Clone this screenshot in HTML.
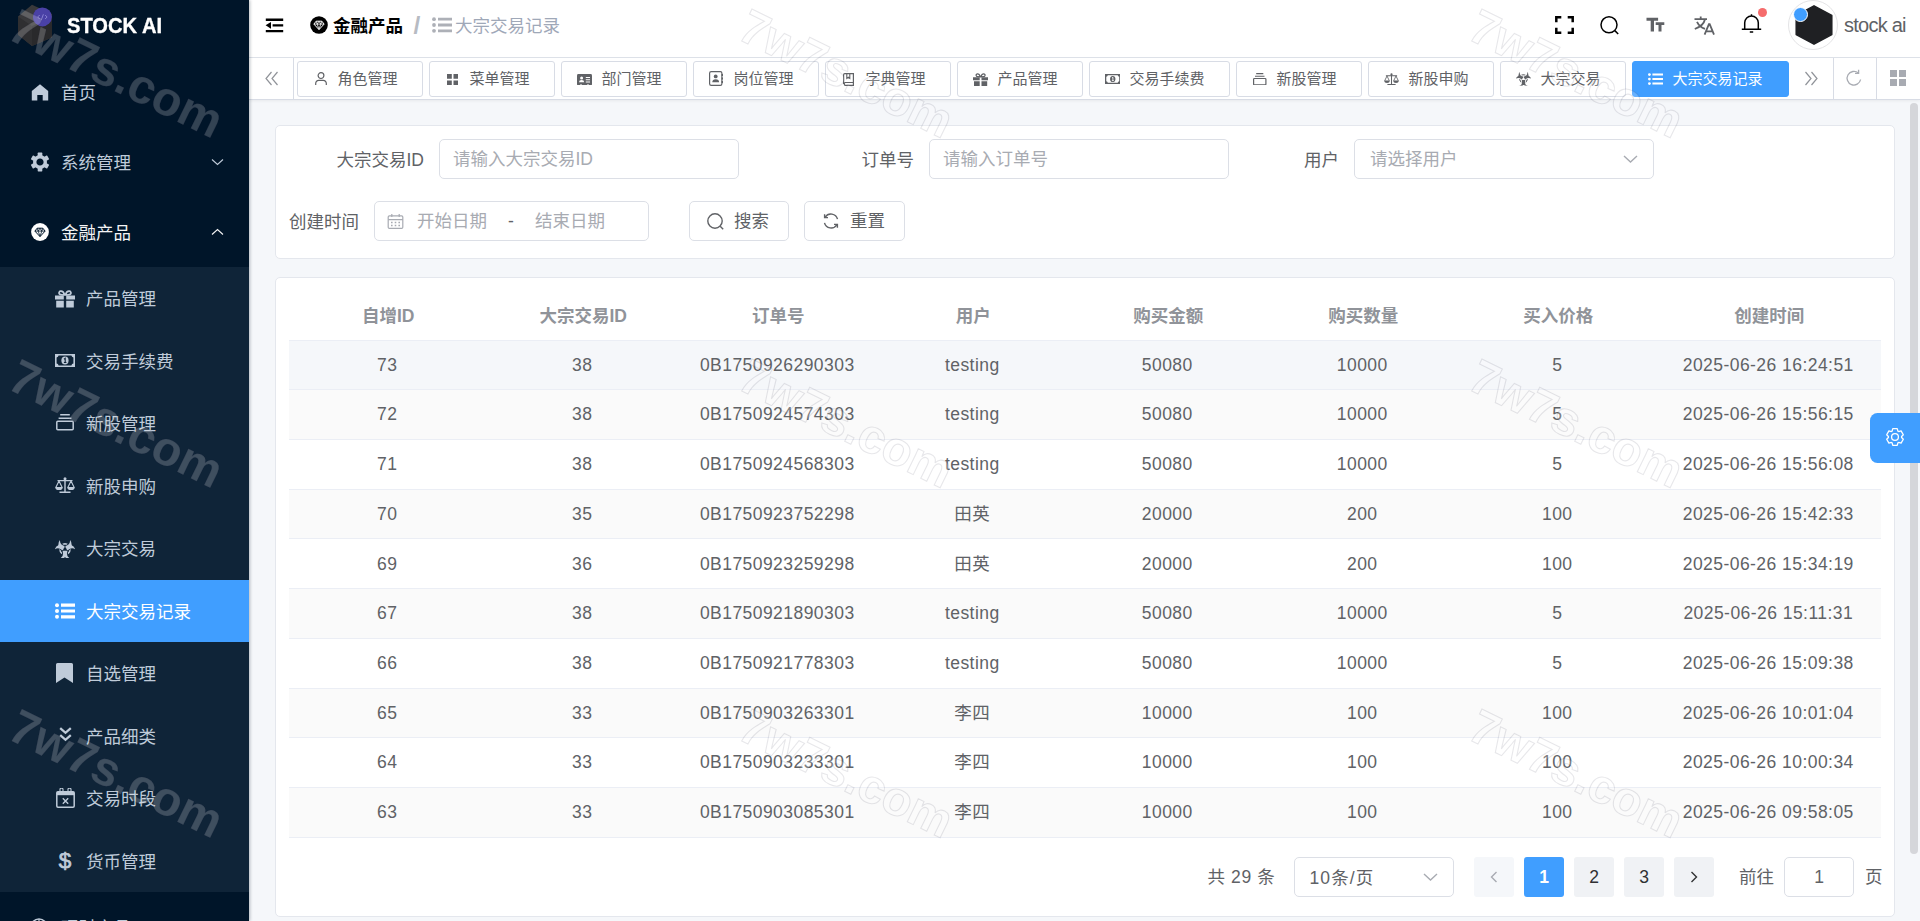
<!DOCTYPE html>
<html lang="zh-CN">
<head>
<meta charset="utf-8">
<title>STOCK AI - 大宗交易记录</title>
<style>
*{box-sizing:border-box;margin:0;padding:0}
html,body{width:1920px;height:921px;overflow:hidden}
body{position:relative;background:#f5f7fa;font-family:"Liberation Sans","Noto Sans CJK SC",sans-serif;font-size:17.5px;color:#606266;-webkit-font-smoothing:antialiased}
svg{display:block}
.abs{position:absolute}
/* ---------- sidebar ---------- */
#sidebar{position:absolute;left:0;top:0;width:249px;height:921px;background:#001529;overflow:hidden;box-shadow:1px 0 3px rgba(0,21,41,.28);z-index:5}
#logo{position:absolute;left:0;top:0;width:249px;height:57px}
#logo .t{position:absolute;left:67px;top:12.500px;font-size:22px;font-weight:bold;color:#fff;line-height:26px;white-space:nowrap;transform-origin:0 50%;transform:scaleX(.915);-webkit-text-stroke:.35px #fff}
.mi{position:absolute;left:0;width:249px;height:70px;color:#bfcbd9;line-height:72.500px;white-space:nowrap}
.mi .ic{position:absolute;left:30px;top:25px;width:20px;height:20px}
.mi .tx{position:absolute;left:61px;top:0}
.mi .ar{position:absolute;left:210px;top:29px;width:14px;height:12px}
#sub{position:absolute;left:0;top:267px;width:249px;height:625px;background:#0f2438}
.si{position:absolute;left:0;width:249px;height:62.5px;color:#bfcbd9;line-height:64px;white-space:nowrap}
.si .ic{position:absolute;left:54px;top:21px;width:21px;height:21px}
.si .tx{position:absolute;left:86px;top:0}
.si.on{background:#409eff;color:#fff}
.mi.act{color:#f4f4f5}
/* ---------- navbar ---------- */
#navbar{position:absolute;left:249px;top:0;width:1671px;height:58px;background:#fff;border-bottom:1px solid #dfe3ea}
#tags{position:absolute;left:249px;top:58px;width:1671px;height:42px;background:#fff;border-bottom:1px solid #d8dce5;box-shadow:0 1px 3px rgba(0,0,0,.06)}
.tag{position:absolute;top:2.500px;height:36px;border:1px solid #d8dce5;border-radius:3px;background:#fff;color:#606266;font-size:15px;line-height:34px;white-space:nowrap}
.tag .ic{position:absolute;left:16px;top:9px;width:15px;height:15px}
.tag .tx{position:absolute;left:39.500px;top:0}
.tag.on{background:#409eff;border-color:#409eff;color:#fff}
/* ---------- cards ---------- */
.card{position:absolute;background:#fff;border:1px solid #e4e7ed;border-radius:5px}
.lbl{position:absolute;color:#606266;line-height:42px;white-space:nowrap;text-align:right}
.inp{position:absolute;height:40px;border:1px solid #dcdfe6;border-radius:5px;background:#fff;color:#a8abb2;line-height:38px;white-space:nowrap}
.btn{position:absolute;height:40px;border:1px solid #dcdfe6;border-radius:5px;background:#fff;color:#606266;line-height:38px;white-space:nowrap}
/* ---------- table ---------- */
#tbl{position:absolute;left:289px;top:291px;width:1592px}
.tr{position:absolute;left:0;width:1592px;height:49.700px;border-bottom:1px solid #ebeef5;color:#606266}
.tr.s{background:#fafafa}
.tr.h{background:#f5f7fa}
.tr.th{color:#909399;font-weight:bold}
.tr span{position:absolute;top:0;height:48.700px;line-height:49.200px;padding-left:1.500px;text-align:center;white-space:nowrap;letter-spacing:.45px}
.tr.th span{letter-spacing:0;line-height:50.500px;padding-left:3.500px}
.c1{left:0;width:195px}.c2{left:195px;width:195px}.c3{left:390px;width:195px}.c4{left:585px;width:195px}
.c5{left:780px;width:195px}.c6{left:975px;width:195px}.c7{left:1170px;width:195px}.c8{left:1365px;width:227px}
/* ---------- pagination ---------- */
.pg{position:absolute;top:857px;height:40px;width:40px;border-radius:3px;background:#f0f2f5;color:#303133;line-height:41.500px;text-align:center;font-size:17.5px}
.pg.on{background:#409eff;color:#fff;font-weight:bold}
/* ---------- watermark ---------- */
.wm{position:absolute;font-size:48.300px;font-weight:bold;white-space:nowrap;transform-origin:0 0;transform:rotate(26deg);pointer-events:none;line-height:47px;color:rgba(255,255,255,.2);-webkit-text-stroke:1.100px rgba(40,40,60,.11);z-index:9}
</style>
</head>
<body>

<!-- ================= SIDEBAR ================= -->
<div id="sidebar">
  <div id="logo">
    <svg class="abs" style="left:16px;top:4px" width="40" height="46" viewBox="0 0 40 46">
      <polygon points="2,12.500 16,.7 36,10 36,33.500 16,42 2,30.700" fill="#39393b"/>
      <polygon points="2,12.500 16,22 16,42 2,30.700" fill="#2f2f31"/>
      <polygon points="16,22 36,13 36,33.500 16,42" fill="#29292b"/>
      <circle cx="26.400" cy="12.900" r="9.500" fill="#4a41a6"/>
      <path d="M23.700 11l-2 2 2 2M29.100 11l2 2-2 2M27.400 10.300l-2 5.400" stroke="#8f88d8" stroke-width=".9" fill="none"/>
    </svg>
    <div class="t">STOCK AI</div>
  </div>

  <div class="mi" style="top:57px"><svg class="abs" style="left:30px;top:26px" width="20" height="19" viewBox="0 0 20 19"><path d="M10 1.200L1.800 8v9.500h5.500v-5.500h5.400v5.500h5.500V8z" fill="currentColor"/></svg><span class="tx">首页</span></div>
  <div class="mi" style="top:127px"><svg class="abs" style="left:30px;top:25px" width="20" height="20" viewBox="0 0 20 20"><g transform="translate(10 10)"><circle r="5.300" fill="none" stroke="currentColor" stroke-width="3.400"/><rect x="-2.300" y="-9.400" width="4.600" height="3.600" rx=".6" fill="currentColor" transform="rotate(0)"/><rect x="-2.300" y="-9.400" width="4.600" height="3.600" rx=".6" fill="currentColor" transform="rotate(60)"/><rect x="-2.300" y="-9.400" width="4.600" height="3.600" rx=".6" fill="currentColor" transform="rotate(120)"/><rect x="-2.300" y="-9.400" width="4.600" height="3.600" rx=".6" fill="currentColor" transform="rotate(180)"/><rect x="-2.300" y="-9.400" width="4.600" height="3.600" rx=".6" fill="currentColor" transform="rotate(240)"/><rect x="-2.300" y="-9.400" width="4.600" height="3.600" rx=".6" fill="currentColor" transform="rotate(300)"/></g></svg><span class="tx">系统管理</span><svg class="abs" style="left:211px;top:31px" width="13" height="8" viewBox="0 0 13 8"><path d="M1 1.500l5.500 5 5.500-5" fill="none" stroke="currentColor" stroke-width="1.100"/></svg></div>
  <div class="mi act" style="top:197px"><svg class="abs" style="left:31px;top:26px" width="18" height="18" viewBox="0 0 18 18"><circle cx="9" cy="9" r="8.900" fill="#fff"/><path d="M6.200 5.200h5.600l2.300 2.900L9 13.600 3.900 8.100z" fill="none" stroke="#001529" stroke-width="1"/><path d="M3.900 8.100h10.200M7.200 8.100L9 13.400l1.800-5.300M6.200 5.200l1 2.900L9 5.200l1.800 2.900 1-2.900" fill="none" stroke="#001529" stroke-width=".8"/></svg><span class="tx">金融产品</span><svg class="abs" style="left:211px;top:30.500px" width="13" height="8" viewBox="0 0 13 8"><path d="M1 6.500l5.500-5 5.500 5" fill="none" stroke="currentColor" stroke-width="1.100"/></svg></div>

  <div id="sub">
    <div class="si" style="top:0"><svg class="abs" style="left:55px;top:22.500px" width="20" height="18" viewBox="0 0 20 18"><path d="M0 5.500h8.800v4H0zM11.200 5.500H20v4h-8.800zM1.200 10.800h7.600v6.700H1.200zM11.200 10.800h7.600v6.700h-7.600z" fill="currentColor"/><path d="M9.600 5C8.800 2.300 7.200 1 5.600 1.200 4 1.400 3.600 3.200 4.600 4.200 5.300 4.900 7 5 9.600 5zM10.400 5c.8-2.700 2.400-4 4-3.800 1.600.2 2 2 1 3-.7.700-2.400.800-5 .800z" fill="none" stroke="currentColor" stroke-width="1.700"/></svg><span class="tx">产品管理</span></div>
    <div class="si" style="top:62.5px"><svg class="abs" style="left:55px;top:24px" width="20" height="13" viewBox="0 0 20 13"><path d="M0 0h20v13H0z" fill="currentColor"/><path d="M1.600 3.400A2.300 2.300 0 0 0 3.600 1.600h12.800a2.300 2.300 0 0 0 2 1.800v6.200a2.300 2.300 0 0 0-2 1.800H3.600a2.300 2.300 0 0 0-2-1.800z" fill="#0f2438"/><ellipse cx="10" cy="6.500" rx="3.600" ry="4.100" fill="currentColor"/><path d="M9 5.200l1.200-.9v4M8.900 8.500h2.500" fill="none" stroke="#0f2438" stroke-width="1.100"/></svg><span class="tx">交易手续费</span></div>
    <div class="si" style="top:125px"><svg class="abs" style="left:56px;top:22px" width="18" height="17" viewBox="0 0 18 17"><path d="M4.200.800h9.600M2.600 4.200h12.800" fill="none" stroke="currentColor" stroke-width="1.500"/><rect x=".8" y="7.300" width="16.400" height="8.400" rx="1" fill="none" stroke="currentColor" stroke-width="1.500"/></svg><span class="tx">新股管理</span></div>
    <div class="si" style="top:187.5px"><svg class="abs" style="left:55px;top:22px" width="20" height="17" viewBox="0 0 20 17"><path d="M10 1.500v13M4.500 15.200h11M2.500 3.600h15" fill="none" stroke="currentColor" stroke-width="1.400"/><circle cx="10" cy="1.800" r="1.500" fill="currentColor"/><path d="M4 4L.8 10.500h6.400zM16 4l-3.200 6.500h6.400z" fill="none" stroke="currentColor" stroke-width="1.100" stroke-linejoin="round"/><path d="M.4 10.500h7.200a3.600 2.600 0 0 1-7.200 0zM12.400 10.500h7.200a3.600 2.600 0 0 1-7.200 0z" fill="currentColor"/></svg><span class="tx">新股申购</span></div>
    <div class="si" style="top:250px"><svg class="abs" style="left:55px;top:22.500px" width="20" height="18.5" viewBox="-22.700 -19.700 45.400 39.600" preserveAspectRatio="none"><defs><clipPath id="bzsc"><circle cx="0.00" cy="-18.50" r="9.500"/><circle cx="16.02" cy="9.25" r="9.500"/><circle cx="-16.02" cy="9.25" r="9.500"/></clipPath><mask id="bzsm" maskUnits="userSpaceOnUse" x="-30" y="-30" width="60" height="60"><g fill="#fff"><circle cx="0.00" cy="-10.00" r="15"/><circle cx="8.66" cy="5.00" r="15"/><circle cx="-8.66" cy="5.00" r="15"/></g><g fill="#000"><circle cx="0.00" cy="-18.50" r="11.500"/><circle cx="16.02" cy="9.25" r="11.500"/><circle cx="-16.02" cy="9.25" r="11.500"/><circle r="3.400"/><rect x="-1.100" y="-8" width="2.200" height="8" transform="rotate(0)"/><rect x="-1.100" y="-8" width="2.200" height="8" transform="rotate(120)"/><rect x="-1.100" y="-8" width="2.200" height="8" transform="rotate(240)"/></g><circle r="11.300" fill="none" stroke="#fff" stroke-width="3.600" clip-path="url(#bzsc)"/></mask></defs><rect x="-30" y="-30" width="60" height="60" fill="currentColor" mask="url(#bzsm)"/></svg><span class="tx">大宗交易</span></div>
    <div class="si on" style="top:312.5px"><svg class="abs" style="left:55px;top:23px" width="20" height="16" viewBox="0 0 20 16"><circle cx="2" cy="2.200" r="2" fill="currentColor"/><circle cx="2" cy="8" r="2" fill="currentColor"/><circle cx="2" cy="13.800" r="2" fill="currentColor"/><path d="M6 .6H20v3.200H6zM6 6.400H20v3.200H6zM6 12.200H20v3.200H6z" fill="currentColor"/></svg><span class="tx">大宗交易记录</span></div>
    <div class="si" style="top:375px"><svg class="abs" style="left:56px;top:20.500px" width="17" height="20" viewBox="0 0 17 20"><path d="M1.500 0h14a1.500 1.500 0 0 1 1.500 1.500V20l-8.500-5.400L0 20V1.500A1.500 1.500 0 0 1 1.500 0z" fill="currentColor"/></svg><span class="tx">自选管理</span></div>
    <div class="si" style="top:437.5px"><svg class="abs" style="left:58.500px;top:22.500px" width="13" height="15" viewBox="0 0 13 15"><path d="M1.200 1.200l5.300 4.600 5.300-4.600M1.200 8.200l5.300 4.600 5.300-4.600" fill="none" stroke="currentColor" stroke-width="2.300"/></svg><span class="tx">产品细类</span></div>
    <div class="si" style="top:500px"><svg class="abs" style="left:55.500px;top:21px" width="19" height="20" viewBox="0 0 19 20"><rect x=".8" y="3.800" width="17.400" height="15.400" rx="1.200" fill="none" stroke="currentColor" stroke-width="1.500"/><path d="M.8 3.800h17.400v3.400H.8z" fill="currentColor"/><rect x="4" y=".3" width="3" height="5" rx="1" fill="none" stroke="currentColor" stroke-width="1.100"/><rect x="12" y=".3" width="3" height="5" rx="1" fill="none" stroke="currentColor" stroke-width="1.100"/><path d="M6.800 10.300l5.400 5.400M12.200 10.300l-5.400 5.400" stroke="currentColor" stroke-width="1.400"/></svg><span class="tx">交易时段</span></div>
    <div class="si" style="top:562.5px"><span class="abs" style="left:58.500px;top:-1px;font-size:22.500px;font-weight:normal;-webkit-text-stroke:.7px currentColor;width:13px;text-align:center">$</span><span class="tx">货币管理</span></div>
  </div>
  <div class="mi" style="top:892px"><svg class="abs" style="left:30px;top:26px" width="18" height="18" viewBox="0 0 18 18"><circle cx="9" cy="9" r="8" fill="none" stroke="currentColor" stroke-width="1.600"/><path d="M9 1v16M1 9h16" stroke="currentColor" stroke-width="1.200"/></svg><span class="tx">理财产品</span></div>
</div>

<!-- ================= NAVBAR ================= -->
<div id="navbar">
  <!-- hamburger (coords relative to navbar: x-249) -->
  <svg class="abs" style="left:16px;top:17px" width="19" height="17" viewBox="0 0 19 17"><path d="M.8 1.6h17.4v2.3H.8zM7.6 7.2h10.6v2.3H7.6zM.8 12.9h17.4v2.3H.8z" fill="#000"/><path d="M.6 8.35L6 5v6.7z" fill="#000"/></svg>
  <!-- breadcrumb -->
  <svg class="abs" style="left:61px;top:16px" width="18" height="18" viewBox="0 0 18 18"><circle cx="9" cy="9" r="8.8" fill="#000"/><path d="M6.2 5.2h5.6l2.3 2.9L9 13.6 3.9 8.1z" fill="none" stroke="#fff" stroke-width="1"/><path d="M3.9 8.1h10.2M7.2 8.1L9 13.4l1.8-5.3M6.2 5.2l1 2.9L9 5.2l1.8 2.9 1-2.9" fill="none" stroke="#fff" stroke-width=".8"/></svg>
  <div class="abs" style="left:84px;top:0;line-height:52px;font-weight:bold;color:#000;white-space:nowrap">金融产品</div>
  <div class="abs" style="left:164.500px;top:0;line-height:51px;font-weight:bold;color:#b7bbc3;font-size:24.500px;white-space:nowrap">/</div>
  <svg class="abs" style="left:183px;top:17px" width="20" height="16" viewBox="0 0 20 16"><circle cx="2" cy="2.200" r="1.900" fill="#adb0b7"/><circle cx="2" cy="8" r="1.900" fill="#adb0b7"/><circle cx="2" cy="13.800" r="1.900" fill="#adb0b7"/><path d="M6 .8H20v2.800H6zM6 6.600H20v2.800H6zM6 12.400H20v2.800H6z" fill="#adb0b7"/></svg>
  <div class="abs" style="left:206px;top:0;line-height:52px;color:#9fa8b8;white-space:nowrap">大宗交易记录</div>

  <!-- right tools -->
  <svg class="abs" style="left:1306px;top:16px" width="19" height="18" viewBox="0 0 19 18"><path d="M1.3 6.2V1.3h5M12.7 1.3h5v4.9M17.7 11.8v4.9h-5M6.3 16.7h-5v-4.9" fill="none" stroke="#000" stroke-width="2.5"/></svg>
  <svg class="abs" style="left:1350px;top:15px" width="22" height="21" viewBox="0 0 22 21"><circle cx="10" cy="9.8" r="8" fill="none" stroke="#000" stroke-width="1.5"/><path d="M15.8 15.6l3.4 3.4" stroke="#000" stroke-width="1.5"/></svg>
  <svg class="abs" style="left:1397px;top:17px" width="19" height="15" viewBox="0 0 19 15"><path d="M.5.8h11.6v3H8v10.6H4.7V3.800H.5zM9.700 5.200h8.600v2.700h-2.800v6.500h-3V7.900H9.700z" fill="#606266"/></svg>
  <svg class="abs" style="left:1445px;top:16px" width="21" height="19" viewBox="0 0 21 19"><path d="M.5 3.200h12.500M6.700.400v2.800M11 3.200C10.200 7 6.500 10.800.8 13M3 5.800c1.500 3.200 4.500 5.800 8 7" fill="none" stroke="#606266" stroke-width="1.800"/><path d="M10.600 18.600l4.300-10.400h.8l4.300 10.400M12.200 15.300h6.200" fill="none" stroke="#606266" stroke-width="1.800"/></svg>
  <svg class="abs" style="left:1492px;top:13px" width="21" height="21" viewBox="0 0 21 21"><path d="M10.500 1.200v1.500M3.700 16V9.800a6.800 6.800 0 0 1 13.600 0V16M.800 16.200h19.400M8.800 19h3.400" fill="none" stroke="#000" stroke-width="1.5"/></svg>
  <div class="abs" style="left:1508.500px;top:7.500px;width:9px;height:9px;border-radius:50%;background:#f56c6c"></div>
  <!-- avatar -->
  <div class="abs" style="left:1539px;top:0;width:50px;height:50px;border-radius:50%;background:#fff;border:1px solid #e4e4e6"></div>
  <svg class="abs" style="left:1546px;top:5px" width="38" height="40" viewBox="0 0 38 40"><polygon points="19,.8 36.800,10.400 36.800,29.600 19,39.200 1.200,29.600 1.200,10.400" fill="#1f2023" stroke="#1f2023" stroke-width="1.500" stroke-linejoin="round"/></svg>
  <div class="abs" style="left:1544px;top:7px;width:15px;height:15px;border-radius:50%;background:#409eff;border:1.500px solid #fff"></div>
  <div class="abs" style="left:1595px;top:0;line-height:50px;font-size:20px;color:#606266;white-space:nowrap;letter-spacing:-.75px">stock ai</div>
</div>

<!-- ================= TAGS ================= -->
<div id="tags">
  <svg class="abs" style="left:16px;top:13px" width="14" height="15" viewBox="0 0 14 15"><path d="M6.500 1L1 7.500 6.500 14M12.500 1L7 7.500 12.500 14" fill="none" stroke="#909399" stroke-width="1.200"/></svg>
  <div class="abs" style="left:44px;top:0;width:1px;height:42px;background:#d8dce5"></div>
  <div class="tag" style="left:48px;width:126px"><svg class="abs" style="left:16.500px;top:10.500px" width="12" height="13.5" viewBox="0 0 12 13.5"><circle cx="6" cy="3.600" r="2.900" fill="none" stroke="currentColor" stroke-width="1.200"/><path d="M.7 13v-1.600a3 3 0 0 1 3-3h4.600a3 3 0 0 1 3 3V13" fill="none" stroke="currentColor" stroke-width="1.200"/></svg><span class="tx">角色管理</span></div>
  <div class="tag" style="left:180px;width:126px"><svg class="abs" style="left:16.500px;top:12px" width="11.3" height="11.3" viewBox="0 0 11.3 11.3"><path d="M0 0h4.800v4.800H0zM6.500 0h4.800v4.800H6.500zM0 6.500h4.800v4.800H0zM6.500 6.500h4.800v4.800H6.500z" fill="currentColor"/></svg><span class="tx">菜单管理</span></div>
  <div class="tag" style="left:312px;width:126px"><svg class="abs" style="left:14.800px;top:12px" width="15" height="11.5" viewBox="0 0 15 11.5"><rect x="0" y="0" width="15" height="11.500" rx="1.400" fill="currentColor"/><circle cx="4.600" cy="4" r="1.500" fill="#fff"/><path d="M2 8.300a2.600 2.200 0 0 1 5.200 0zM8.800 3h4.200v1H8.800zM8.800 5.200h4.200v1H8.800zM8.800 7.400h4.200v1H8.800z" fill="#fff"/><path d="M3 10.600h2v.9H3zM10 10.600h2v.9h-2z" fill="#fff"/></svg><span class="tx">部门管理</span></div>
  <div class="tag" style="left:444px;width:126px"><svg class="abs" style="left:14.500px;top:9.800px" width="14.5" height="15" viewBox="0 0 14.5 15"><rect x=".6" y=".6" width="12.300" height="13.800" rx="1.600" fill="none" stroke="currentColor" stroke-width="1.200"/><circle cx="6.700" cy="5.400" r="1.900" fill="currentColor"/><path d="M3.300 11.200a3.400 2.900 0 0 1 6.800 0z" fill="currentColor"/><path d="M13.300 3v2M13.300 6.500v2M13.300 10v2" stroke="currentColor" stroke-width="1.500"/></svg><span class="tx">岗位管理</span></div>
  <div class="tag" style="left:576px;width:126px"><svg class="abs" style="left:16.800px;top:11px" width="11" height="13" viewBox="0 0 11 13"><path d="M.6 11V1.800A1.200 1.200 0 0 1 1.800.6h8.600V9.500H2.200A1.600 1.600 0 0 0 2.200 12.400h8.200V9.500" fill="none" stroke="currentColor" stroke-width="1.200"/><path d="M3.800.6v4.800l1.500-1.200 1.500 1.200V.6" fill="none" stroke="currentColor" stroke-width="1.100"/></svg><span class="tx">字典管理</span></div>
  <div class="tag" style="left:708px;width:126px"><svg class="abs" style="left:14.500px;top:11px" width="15.2" height="13.2" viewBox="0 0 15.2 13.2"><path d="M0 4.200h6.700v3H0zM8.500 4.200h6.700v3H8.500zM1 8.200h5.700v5H1zM8.500 8.200h5.700v5H8.500z" fill="currentColor"/><path d="M7.300 3.800C6.700 1.800 5.500.8 4.300.9 3.100 1 2.800 2.400 3.500 3.200 4 3.700 5.300 3.800 7.300 3.800zM7.900 3.800c.6-2 1.800-3 3-2.900 1.200.100 1.500 1.500.800 2.300-.5.500-1.800.6-3.800.6z" fill="none" stroke="currentColor" stroke-width="1.300"/></svg><span class="tx">产品管理</span></div>
  <div class="tag" style="left:840px;width:141px"><svg class="abs" style="left:14.500px;top:12.500px" width="15.5" height="10" viewBox="0 0 15.5 10"><path d="M0 0h15.500v10H0z" fill="currentColor"/><path d="M1.300 2.700A1.800 1.800 0 0 0 2.800 1.300h9.900a1.800 1.800 0 0 0 1.500 1.400v4.600a1.800 1.800 0 0 0-1.500 1.400H2.800a1.800 1.800 0 0 0-1.500-1.400z" fill="#fff"/><ellipse cx="7.750" cy="5" rx="2.700" ry="3.100" fill="currentColor"/><path d="M7 4l.9-.7v3.200M6.900 6.600h1.900" fill="none" stroke="#fff" stroke-width=".85"/></svg><span class="tx">交易手续费</span></div>
  <div class="tag" style="left:987px;width:126px"><svg class="abs" style="left:16px;top:11px" width="13.5" height="12.5" viewBox="0 0 13.5 12.5"><path d="M3.200.6h7.100M2 3.200h9.500" fill="none" stroke="currentColor" stroke-width="1.100"/><rect x=".6" y="5.500" width="12.300" height="6.400" rx=".8" fill="none" stroke="currentColor" stroke-width="1.200"/></svg><span class="tx">新股管理</span></div>
  <div class="tag" style="left:1119px;width:126px"><svg class="abs" style="left:14.500px;top:11.500px" width="15" height="12.5" viewBox="0 0 15 12.5"><path d="M7.500 1.200v9.800M3.400 11.500h8.200M1.900 2.700h11.200" fill="none" stroke="currentColor" stroke-width="1.050"/><circle cx="7.500" cy="1.400" r="1.100" fill="currentColor"/><path d="M3 3L.6 7.900h4.800zM12 3L9.600 7.900h4.800z" fill="none" stroke="currentColor" stroke-width=".85" stroke-linejoin="round"/><path d="M.3 7.900h5.400a2.700 2 0 0 1-5.400 0zM9.300 7.900h5.400a2.700 2 0 0 1-5.400 0z" fill="currentColor"/></svg><span class="tx">新股申购</span></div>
  <div class="tag" style="left:1251px;width:126px"><svg class="abs" style="left:14.700px;top:10.800px" width="15" height="13.7" viewBox="-22.700 -19.700 45.400 39.600" preserveAspectRatio="none"><defs><clipPath id="bztc"><circle cx="0.00" cy="-18.50" r="9.500"/><circle cx="16.02" cy="9.25" r="9.500"/><circle cx="-16.02" cy="9.25" r="9.500"/></clipPath><mask id="bztm" maskUnits="userSpaceOnUse" x="-30" y="-30" width="60" height="60"><g fill="#fff"><circle cx="0.00" cy="-10.00" r="15"/><circle cx="8.66" cy="5.00" r="15"/><circle cx="-8.66" cy="5.00" r="15"/></g><g fill="#000"><circle cx="0.00" cy="-18.50" r="11.500"/><circle cx="16.02" cy="9.25" r="11.500"/><circle cx="-16.02" cy="9.25" r="11.500"/><circle r="3.400"/><rect x="-1.100" y="-8" width="2.200" height="8" transform="rotate(0)"/><rect x="-1.100" y="-8" width="2.200" height="8" transform="rotate(120)"/><rect x="-1.100" y="-8" width="2.200" height="8" transform="rotate(240)"/></g><circle r="11.300" fill="none" stroke="#fff" stroke-width="3.600" clip-path="url(#bztc)"/></mask></defs><rect x="-30" y="-30" width="60" height="60" fill="currentColor" mask="url(#bztm)"/></svg><span class="tx">大宗交易</span></div>
  <div class="tag on" style="left:1383px;width:157px"><svg class="abs" style="left:15px;top:11.500px" width="15" height="12.2" viewBox="0 0 15 12.2"><circle cx="1.400" cy="1.600" r="1.400" fill="currentColor"/><circle cx="1.400" cy="6.100" r="1.400" fill="currentColor"/><circle cx="1.400" cy="10.600" r="1.400" fill="currentColor"/><path d="M4.400.6H15v2H4.400zM4.400 5.100H15v2H4.400zM4.400 9.600H15v2H4.400z" fill="currentColor"/></svg><span class="tx">大宗交易记录</span></div>
  <svg class="abs" style="left:1555px;top:13px" width="14" height="15" viewBox="0 0 14 15"><path d="M1.500 1L7 7.500 1.500 14M7.500 1L13 7.500 7.500 14" fill="none" stroke="#909399" stroke-width="1.200"/></svg>
  <div class="abs" style="left:1584px;top:0;width:1px;height:42px;background:#d8dce5"></div>
  <svg class="abs" style="left:1596px;top:11px" width="18" height="18" viewBox="0 0 18 18"><path d="M15.600 10.500A6.800 6.800 0 1 1 13.300 4" fill="none" stroke="#a8abb2" stroke-width="1.300"/><path d="M13.600.800v3.600H10" fill="none" stroke="#a8abb2" stroke-width="1.300"/></svg>
  <div class="abs" style="left:1627px;top:0;width:1px;height:42px;background:#d8dce5"></div>
  <svg class="abs" style="left:1641px;top:12px" width="16" height="16" viewBox="0 0 16 16"><path d="M0 0h7v7H0zM9 0h7v7H9zM0 9h7v7H0zM9 9h7v7H9z" fill="#a8abb2"/></svg>
</div>

<!-- ================= SEARCH CARD ================= -->
<div class="card" id="card1" style="left:275px;top:125px;width:1620px;height:134px"></div>

<!-- ================= TABLE CARD ================= -->
<div class="card" id="card2" style="left:275px;top:277px;width:1620px;height:640px"></div>

<!-- ================= TABLE ================= -->
<div id="tbl">
  <div class="tr th" style="top:0"><span class="c1">自增ID</span><span class="c2">大宗交易ID</span><span class="c3">订单号</span><span class="c4">用户</span><span class="c5">购买金额</span><span class="c6">购买数量</span><span class="c7">买入价格</span><span class="c8">创建时间</span></div>
  <div class="tr h" style="top:49.7px"><span class="c1">73</span><span class="c2">38</span><span class="c3">0B1750926290303</span><span class="c4">testing</span><span class="c5">50080</span><span class="c6">10000</span><span class="c7">5</span><span class="c8">2025-06-26 16:24:51</span></div>
  <div class="tr s" style="top:99.4px"><span class="c1">72</span><span class="c2">38</span><span class="c3">0B1750924574303</span><span class="c4">testing</span><span class="c5">50080</span><span class="c6">10000</span><span class="c7">5</span><span class="c8">2025-06-26 15:56:15</span></div>
  <div class="tr" style="top:149.1px"><span class="c1">71</span><span class="c2">38</span><span class="c3">0B1750924568303</span><span class="c4">testing</span><span class="c5">50080</span><span class="c6">10000</span><span class="c7">5</span><span class="c8">2025-06-26 15:56:08</span></div>
  <div class="tr s" style="top:198.8px"><span class="c1">70</span><span class="c2">35</span><span class="c3">0B1750923752298</span><span class="c4">田英</span><span class="c5">20000</span><span class="c6">200</span><span class="c7">100</span><span class="c8">2025-06-26 15:42:33</span></div>
  <div class="tr" style="top:248.5px"><span class="c1">69</span><span class="c2">36</span><span class="c3">0B1750923259298</span><span class="c4">田英</span><span class="c5">20000</span><span class="c6">200</span><span class="c7">100</span><span class="c8">2025-06-26 15:34:19</span></div>
  <div class="tr s" style="top:298.2px"><span class="c1">67</span><span class="c2">38</span><span class="c3">0B1750921890303</span><span class="c4">testing</span><span class="c5">50080</span><span class="c6">10000</span><span class="c7">5</span><span class="c8">2025-06-26 15:11:31</span></div>
  <div class="tr" style="top:347.9px"><span class="c1">66</span><span class="c2">38</span><span class="c3">0B1750921778303</span><span class="c4">testing</span><span class="c5">50080</span><span class="c6">10000</span><span class="c7">5</span><span class="c8">2025-06-26 15:09:38</span></div>
  <div class="tr s" style="top:397.6px"><span class="c1">65</span><span class="c2">33</span><span class="c3">0B1750903263301</span><span class="c4">李四</span><span class="c5">10000</span><span class="c6">100</span><span class="c7">100</span><span class="c8">2025-06-26 10:01:04</span></div>
  <div class="tr" style="top:447.3px"><span class="c1">64</span><span class="c2">33</span><span class="c3">0B1750903233301</span><span class="c4">李四</span><span class="c5">10000</span><span class="c6">100</span><span class="c7">100</span><span class="c8">2025-06-26 10:00:34</span></div>
  <div class="tr s" style="top:497.0px"><span class="c1">63</span><span class="c2">33</span><span class="c3">0B1750903085301</span><span class="c4">李四</span><span class="c5">10000</span><span class="c6">100</span><span class="c7">100</span><span class="c8">2025-06-26 09:58:05</span></div>
</div>

<!-- ================= PAGINATION ================= -->
<div class="abs" style="left:1207.500px;top:857px;line-height:41.500px;color:#606266;white-space:nowrap;letter-spacing:.6px">共 29 条</div>
<div class="inp" style="left:1294px;top:857px;width:160px;color:#606266"><span class="abs" style="left:14.500px;top:1px;letter-spacing:1.100px">10条/页</span>
  <svg class="abs" style="left:127px;top:13px" width="17" height="12" viewBox="0 0 17 12"><path d="M2 3l6.5 6 6.5-6" stroke="#a8abb2" stroke-width="1.4" fill="none"/></svg></div>
<div class="pg" style="left:1474px;background:#f5f7fa"><svg class="abs" style="left:14px;top:13px" width="12" height="14" viewBox="0 0 12 14"><path d="M8.5 2L3.5 7l5 5" stroke="#a8abb2" stroke-width="1.4" fill="none"/></svg></div>
<div class="pg on" style="left:1524px">1</div>
<div class="pg" style="left:1574px">2</div>
<div class="pg" style="left:1624px">3</div>
<div class="pg" style="left:1674px"><svg class="abs" style="left:14px;top:13px" width="12" height="14" viewBox="0 0 12 14"><path d="M3.5 2l5 5-5 5" stroke="#303133" stroke-width="1.4" fill="none"/></svg></div>
<div class="abs" style="left:1739px;top:857px;line-height:41.500px;color:#606266;white-space:nowrap">前往</div>
<div class="inp" style="left:1784px;top:857px;width:70px;color:#606266;text-align:center">1</div>
<div class="abs" style="left:1865px;top:857px;line-height:41.500px;color:#606266;white-space:nowrap">页</div>

<!-- ================= SEARCH FORM ================= -->
<div class="lbl" style="left:289px;top:139px;width:135px">大宗交易ID</div>
<div class="inp" style="left:439px;top:139px;width:300px"><span class="abs" style="left:13px;top:0">请输入大宗交易ID</span></div>
<div class="lbl" style="left:779px;top:139px;width:135px">订单号</div>
<div class="inp" style="left:929px;top:139px;width:300px"><span class="abs" style="left:13px;top:0">请输入订单号</span></div>
<div class="lbl" style="left:1204px;top:139px;width:135px">用户</div>
<div class="inp" style="left:1354px;top:139px;width:300px"><span class="abs" style="left:15px;top:0">请选择用户</span>
  <svg class="abs" style="left:267px;top:13px" width="17" height="12" viewBox="0 0 17 12"><path d="M2 3l6.5 6 6.5-6" stroke="#a8abb2" stroke-width="1.4" fill="none"/></svg></div>
<div class="lbl" style="left:274px;top:201px;width:85px">创建时间</div>
<div class="inp" style="left:374px;top:201px;width:275px">
  <svg class="abs" style="left:12px;top:11px" width="17" height="17" viewBox="0 0 17 17"><rect x="1.2" y="2.8" width="14.6" height="12.6" rx="1.2" stroke="#a8abb2" stroke-width="1.2" fill="none"/><path d="M1.2 6.6h14.6M4.8 1v3M12.2 1v3" stroke="#a8abb2" stroke-width="1.2"/><path d="M4 9.5h1.6M7.7 9.5h1.6M11.4 9.5H13M4 12.5h1.6M7.7 12.5h1.6M11.4 12.5H13" stroke="#a8abb2" stroke-width="1.3"/></svg>
  <span class="abs" style="left:42px;top:0">开始日期</span><span class="abs" style="left:133px;top:0;color:#606266">-</span><span class="abs" style="left:160px;top:0">结束日期</span></div>
<div class="btn" style="left:689px;top:201px;width:100px"><svg class="abs" style="left:16px;top:10px" width="19" height="19" viewBox="0 0 19 19"><circle cx="9" cy="9" r="7.2" stroke="#606266" stroke-width="1.4" fill="none"/><path d="M14.2 14.2l3 3" stroke="#606266" stroke-width="1.4"/></svg><span class="abs" style="left:44px;top:0">搜索</span></div>
<div class="btn" style="left:804px;top:201px;width:101px"><svg class="abs" style="left:17px;top:10px" width="18" height="18" viewBox="0 0 18 18"><path d="M15.5 7.2A6.8 6.8 0 0 0 3.2 5.2M2.5 10.8a6.8 6.8 0 0 0 12.3 2" stroke="#606266" stroke-width="1.4" fill="none"/><path d="M2.6 2.2v3.4H6M15.4 15.8v-3.4H12" stroke="#606266" stroke-width="1.4" fill="none"/></svg><span class="abs" style="left:45px;top:0">重置</span></div>


<!-- ================= SCROLLBAR + SETTINGS ================= -->
<div class="abs" style="left:1910px;top:103px;width:7.500px;height:751px;border-radius:4px;background:#d5d6da;z-index:3"></div>
<div class="abs" style="left:1870px;top:413px;width:50px;height:50px;border-radius:7.500px 0 0 7.500px;background:#409eff;z-index:7">
  <svg class="abs" style="left:13px;top:11.500px" width="24" height="24" viewBox="0 0 24 24"><path d="M9.77 3.69 L14.23 3.69 L14.89 6.07 L15.69 6.53 L18.08 5.92 L20.31 9.77 L18.58 11.54 L18.58 12.46 L20.31 14.23 L18.08 18.08 L15.69 17.47 L14.89 17.93 L14.23 20.31 L9.77 20.31 L9.11 17.93 L8.31 17.47 L5.92 18.08 L3.69 14.23 L5.42 12.46 L5.42 11.54 L3.69 9.77 L5.92 5.92 L8.31 6.53 L9.11 6.07Z" fill="none" stroke="#fff" stroke-width="1.300" stroke-linejoin="round"/><circle cx="12" cy="12" r="3.400" fill="none" stroke="#fff" stroke-width="1.300"/></svg>
</div>
<!-- ================= WATERMARK ================= -->
<div class="wm" style="left:22.5px;top:1.5px">7w7s.com</div>
<div class="wm" style="left:22.5px;top:351.5px">7w7s.com</div>
<div class="wm" style="left:22.5px;top:701.5px">7w7s.com</div>
<div class="wm" style="left:752.5px;top:1.5px">7w7s.com</div>
<div class="wm" style="left:752.5px;top:351.5px">7w7s.com</div>
<div class="wm" style="left:752.5px;top:701.5px">7w7s.com</div>
<div class="wm" style="left:1482.5px;top:1.5px">7w7s.com</div>
<div class="wm" style="left:1482.5px;top:351.5px">7w7s.com</div>
<div class="wm" style="left:1482.5px;top:701.5px">7w7s.com</div>
</body>
</html>
